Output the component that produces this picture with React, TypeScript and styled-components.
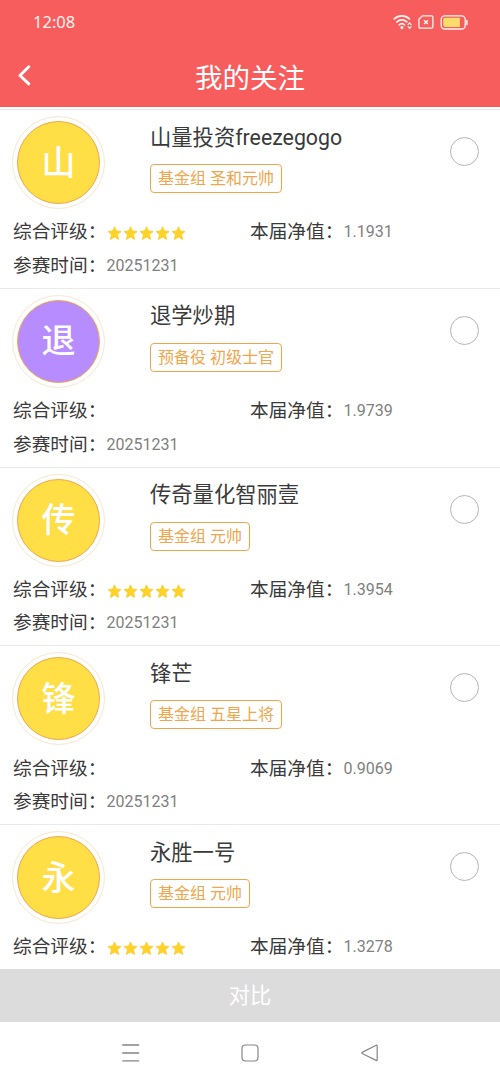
import React from "react";
import styled, { createGlobalStyle } from "styled-components";

const GlobalStyle = createGlobalStyle`
  * { box-sizing: border-box; }
  body {
    margin: 0;
    background: #fff;
    font-family: Roboto, "Noto Sans CJK SC", sans-serif;
    color: #3a3a3a;
  }
`;

const Screen = styled.div`
  display: flex;
  flex-direction: column;
  width: 500px;
  height: 1083px;
  overflow: hidden;
  background: #fff;
`;

const Header = styled.header`
  flex: none;
  height: 107px;
  background: #f75d5d;
  border-bottom: 1px solid #e9605f;
  color: #fff;
`;

const StatusBar = styled.div`
  display: flex;
  align-items: center;
  justify-content: space-between;
  height: 44px;
  padding: 0 32px 0 33px;
`;

const Clock = styled.span`
  font-family: "Noto Sans", sans-serif;
  font-size: 16.5px;
  line-height: 20px;
  color: #fff2ee;
`;

const StatusIcons = styled.div`
  display: flex;
  align-items: center;
  gap: 6px;
`;

const TitleBar = styled.div`
  display: grid;
  grid-template-columns: 100px 1fr 100px;
  align-items: center;
  height: 62px;
`;

const BackButton = styled.button`
  display: flex;
  width: 40px;
  padding: 0 0 0 16.5px;
  border: 0;
  background: none;
`;

const Title = styled.h1`
  margin: 0;
  padding-top: 7px;
  font-size: 27.5px;
  font-weight: 400;
  line-height: 40px;
  text-align: center;
`;

const List = styled.main`
  flex: 1;
  min-height: 0;
  padding-top: 2px;
  overflow: hidden;
`;

const Row = styled.article`
  height: 178.8px;
  border-top: 1.5px solid #e9ebeb;
`;

const Profile = styled.div`
  display: grid;
  grid-template-columns: 138px 1fr auto;
  align-items: start;
  height: 105px;
  padding: 6px 21px 0 12px;
`;

const AvatarRing = styled.div`
  display: flex;
  align-items: center;
  width: 93px;
  height: 93px;
  padding-left: 4px;
  border: 1px solid #f8e7cc;
  border-radius: 50%;
`;

const Avatar = styled.div<{ $color: string }>`
  display: flex;
  align-items: center;
  justify-content: center;
  width: 83px;
  height: 83px;
  border: 1.5px solid #f0a64b;
  border-radius: 50%;
  background: ${(p) => p.$color};
  color: #fff;
  font-size: 34px;
  font-weight: 500;
  line-height: 40px;
`;

const Identity = styled.div`
  display: flex;
  flex-direction: column;
  align-items: flex-start;
  gap: 11.5px;
  padding-top: 6.5px;
`;

const Name = styled.h2`
  margin: 0;
  font-size: 21.3px;
  font-weight: 400;
  line-height: 30px;
  white-space: nowrap;
`;

const Rank = styled.span`
  height: 29px;
  padding: 0 7px;
  border: 1.5px solid #efa54a;
  border-radius: 4px;
  color: #efa64e;
  font-size: 16px;
  line-height: 28px;
  white-space: nowrap;
`;

const Radio = styled.span`
  width: 29px;
  height: 29px;
  margin-top: 21px;
  border: 1.5px solid #b5b5b5;
  border-radius: 50%;
`;

const Facts = styled.div`
  display: grid;
  grid-template-columns: 237px 1fr;
  grid-auto-rows: 33.5px;
  padding-left: 13px;
`;

const Fact = styled.div`
  display: flex;
  align-items: center;
  height: 33.5px;
`;

const Label = styled.span`
  width: 93.5px;
  padding-top: 1px;
  font-size: 18.7px;
  line-height: 28px;
  white-space: nowrap;
`;

const Value = styled.span`
  padding-top: 1px;
  color: #808080;
  font-size: 16px;
  line-height: 28px;
`;

const StarRow = styled.span`
  display: flex;
  gap: 1px;
  padding-top: 4px;
`;

const CompareButton = styled.button`
  flex: none;
  height: 53px;
  padding: 0;
  border: 0;
  background: #dcdcdc;
  color: #fff;
  font-family: inherit;
  font-size: 21.3px;
  line-height: 53px;
`;

const NavBar = styled.nav`
  display: flex;
  flex: none;
  align-items: center;
  justify-content: center;
  gap: 99.5px;
  height: 61px;
  background: #fff;
`;

const Stars = () => (
  <StarRow>
    {[0, 1, 2, 3, 4].map((i) => (
      <svg key={i} width="15" height="15" viewBox="0 0 15 15">
        <path
          d="M7.5 .9 9.3 5 14 5.5 10.5 8.6 11.6 13.4 7.5 11 3.4 13.4 4.5 8.6 1 5.5 5.7 5Z"
          fill="#fdd22b"
          stroke="#fdd22b"
          strokeWidth="1"
          strokeLinejoin="round"
        />
      </svg>
    ))}
  </StarRow>
);

const WifiIcon = () => (
  <svg width="19" height="16" viewBox="0 0 19 16" fill="none" stroke="#fff4ee" strokeWidth="1.7" strokeLinecap="round">
    <path d="M1.3 4.9C5.5.8 12.2.8 16.4 4.9" />
    <path d="M3.8 8C6.7 5.2 11 5.2 13.8 7.8" />
    <path d="M6.3 10.9C7.8 9.5 10 9.5 11.4 10.9" />
    <circle cx="8.9" cy="13.6" r=".7" fill="#fff4ee" />
    <path d="M15.1 10.6 16.6 9l1.5 1.6M15.1 12.7l1.5 1.6 1.5-1.6" strokeWidth="1.2" />
  </svg>
);

const SimIcon = () => (
  <svg width="16" height="14" viewBox="0 0 16 14" fill="none" stroke="#fff4ee" strokeWidth="1.3">
    <path d="M4.3.9H13.6Q14.9.9 14.9 2.2V11.8Q14.9 13.1 13.6 13.1H2.2Q.9 13.1.9 11.8V4.3Z" strokeLinejoin="round" />
    <path d="m6.1 5.2 3.8 3.8m0-3.8L6.1 9" strokeWidth="1.5" />
  </svg>
);

const BatteryIcon = () => (
  <svg width="28" height="15" viewBox="0 0 28 15" fill="none">
    <rect x="1.2" y=".8" width="24" height="13.2" rx="3.6" stroke="#fff4ee" strokeWidth="1.3" />
    <path d="M5.2 2.8H19.9V12H5.2Q3.2 12 3.2 10V4.8Q3.2 2.8 5.2 2.8Z" fill="#f8dc6c" />
    <path d="M26.9 5.4v4" stroke="#fff4ee" strokeWidth="1.5" strokeLinecap="round" />
  </svg>
);

type Trader = {
  name: string;
  initial: string;
  color: string;
  rank: string;
  starred: boolean;
  netValue: string;
  joined?: string;
};

const YELLOW = "#ffde46";
const PURPLE = "#b78cff";

const traders: Trader[] = [
  { name: "山量投资freezegogo", initial: "山", color: YELLOW, rank: "基金组 圣和元帅", starred: true, netValue: "1.1931", joined: "20251231" },
  { name: "退学炒期", initial: "退", color: PURPLE, rank: "预备役 初级士官", starred: false, netValue: "1.9739", joined: "20251231" },
  { name: "传奇量化智丽壹", initial: "传", color: YELLOW, rank: "基金组 元帅", starred: true, netValue: "1.3954", joined: "20251231" },
  { name: "锋芒", initial: "锋", color: YELLOW, rank: "基金组 五星上将", starred: false, netValue: "0.9069", joined: "20251231" },
  { name: "永胜一号", initial: "永", color: YELLOW, rank: "基金组 元帅", starred: true, netValue: "1.3278" },
];

const TraderRow = ({ trader }: { trader: Trader }) => (
  <Row>
    <Profile>
      <AvatarRing>
        <Avatar $color={trader.color}>{trader.initial}</Avatar>
      </AvatarRing>
      <Identity>
        <Name>{trader.name}</Name>
        <Rank>{trader.rank}</Rank>
      </Identity>
      <Radio />
    </Profile>
    <Facts>
      <Fact>
        <Label>综合评级：</Label>
        {trader.starred && <Stars />}
      </Fact>
      <Fact>
        <Label>本届净值：</Label>
        <Value>{trader.netValue}</Value>
      </Fact>
      {trader.joined && (
        <Fact>
          <Label>参赛时间：</Label>
          <Value>{trader.joined}</Value>
        </Fact>
      )}
    </Facts>
  </Row>
);

export default function App() {
  return (
    <Screen lang="zh-CN">
      <GlobalStyle />
      <Header>
        <StatusBar>
          <Clock>12:08</Clock>
          <StatusIcons>
            <WifiIcon />
            <SimIcon />
            <BatteryIcon />
          </StatusIcons>
        </StatusBar>
        <TitleBar>
          <BackButton aria-label="返回">
            <svg width="14" height="22" viewBox="0 0 14 22" fill="none" stroke="#fff" strokeWidth="3" strokeLinecap="round" strokeLinejoin="round">
              <path d="M11.8 2.8 3 11.5l8.8 8.3" />
            </svg>
          </BackButton>
          <Title>我的关注</Title>
        </TitleBar>
      </Header>
      <List>
        {traders.map((t) => (
          <TraderRow key={t.name} trader={t} />
        ))}
      </List>
      <CompareButton>对比</CompareButton>
      <NavBar>
        <svg width="20" height="20" viewBox="0 0 20 20" stroke="#858585" strokeWidth="1.3">
          <path d="M1.3 2H18.2M1.3 10H18.2M1.3 17.8H18.2" />
        </svg>
        <svg width="20" height="20" viewBox="0 0 20 20" fill="none" stroke="#858585" strokeWidth="1.2">
          <rect x="2" y="2" width="16" height="16" rx="3.5" />
        </svg>
        <svg width="20" height="20" viewBox="0 0 20 20" fill="none" stroke="#858585" strokeWidth="1.2" strokeLinejoin="round">
          <path d="M16.2 2.3Q17.2 1.8 17.2 3V16.8Q17.2 18 16.2 17.4L2.1 10.5Q1.3 9.9 2.1 9.4Z" />
        </svg>
      </NavBar>
    </Screen>
  );
}
